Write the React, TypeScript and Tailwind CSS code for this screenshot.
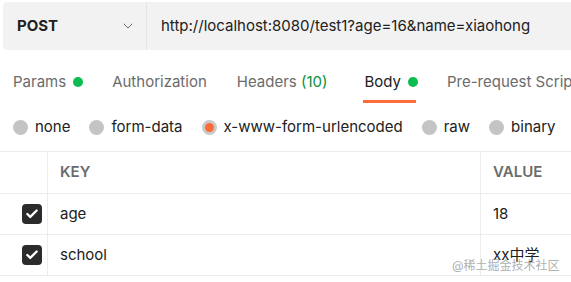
import { Check, ChevronDown } from "lucide-react"

const font = { fontFamily: "Inter, 'Noto Sans CJK SC', sans-serif" }

const Radio = ({ label, active }: { label: string; active?: boolean }) => (
  <div className="flex items-center gap-[7px]">
    {active ? (
      <span className="w-[15px] h-[15px] rounded-full bg-[#ff6c37] border-[3px] border-[#c9c9c9]" />
    ) : (
      <span className="w-[15px] h-[15px] rounded-full bg-[#c4c4c4]" />
    )}
    <span>{label}</span>
  </div>
)

const Row = ({ k, v }: { k: string; v: string }) => (
  <div className="flex h-[41px] border-b border-[#ececec] text-[#212121]">
    <div className="w-[48px] shrink-0 border-r border-[#ececec] flex items-center justify-end pr-[5px]">
      <span className="w-[20px] h-[20px] rounded-[4px] bg-[#2b2b2b] flex items-center justify-center">
        <Check size={14} strokeWidth={4} color="#fff" />
      </span>
    </div>
    <div className="w-[433px] shrink-0 border-r border-[#ececec] flex items-center pl-[12px]">{k}</div>
    <div className="flex-1 flex items-center pl-[12px] whitespace-nowrap">{v}</div>
  </div>
)

export default function App() {
  return (
    <div className="relative w-[571px] h-[282px] overflow-hidden bg-white text-[15px]" style={font}>
      <div className="pl-[3px] pt-[2px]">
        <div className="flex h-[48px] bg-[#f2f2f2] rounded-l-[4px]">
          <div className="w-[144px] shrink-0 flex items-center justify-between pl-[14px] pr-[10px] border-r border-[#e4e4e4]">
            <span className="font-bold text-[#212121]">POST</span>
            <ChevronDown size={16} strokeWidth={1.5} color="#6b6b6b" />
          </div>
          <div className="flex items-center pl-[14px] text-[#212121] whitespace-nowrap">
            http://localhost:8080/test1?age=16&amp;name=xiaohong
          </div>
        </div>
      </div>

      <div className="flex items-start h-[53px] pl-[13px] pt-[21px] whitespace-nowrap text-[#6b6b6b]">
        <div className="flex items-center gap-[7px]">
          Params <span className="w-[10px] h-[10px] rounded-full bg-[#0cbb52]" />
        </div>
        <div className="ml-[29px]">Authorization</div>
        <div className="ml-[30px]">
          Headers <span className="text-[#0a8f3f]">(10)</span>
        </div>
        <div className="ml-[37px] flex flex-col">
          <div className="flex items-center gap-[7px] text-[#212121]">
            Body <span className="w-[10px] h-[10px] rounded-full bg-[#0cbb52]" />
          </div>
          <div className="mt-[6px] h-[3px] w-[53px] bg-[#ff6c37] -ml-[1px]" />
        </div>
        <div className="ml-[29px]">Pre-request Script</div>
      </div>

      <div className="flex items-center h-[48px] pl-[13px] gap-[19px] text-[#212121] whitespace-nowrap">
        <Radio label="none" />
        <Radio label="form-data" />
        <Radio label="x-www-form-urlencoded" active />
        <Radio label="raw" />
        <Radio label="binary" />
      </div>

      <div className="border-t border-[#ececec]">
        <div className="flex h-[42px] border-b border-[#ececec] font-semibold text-[#6b6b6b]">
          <div className="w-[48px] shrink-0 border-r border-[#ececec]" />
          <div className="w-[433px] shrink-0 border-r border-[#ececec] flex items-center pl-[12px]">KEY</div>
          <div className="flex-1 flex items-center pl-[12px]">VALUE</div>
        </div>
        <Row k="age" v="18" />
        <Row k="school" v="xx中学" />
      </div>

      <div className="absolute left-[452px] top-[257px] text-[12px] text-[#9a9a9a]/80 whitespace-nowrap">
        @稀土掘金技术社区
      </div>
    </div>
  )
}
